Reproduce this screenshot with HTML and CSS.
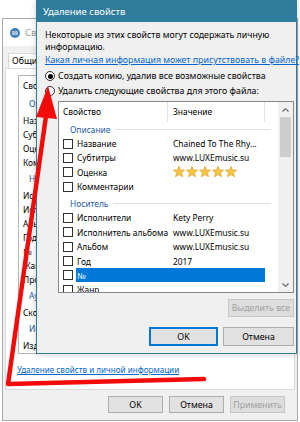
FILE: index.html
```html
<!DOCTYPE html>
<html lang="ru">
<head>
    <meta charset="UTF-8">
    <meta name="viewport" content="width=device-width, initial-scale=1.0">
    <title>Удаление свойств</title>
    <link rel="stylesheet" href="styles.css">
</head>
<body>
    <div class="screen">
        <!-- окно свойств файла на заднем плане -->
        <div class="props">
            <div class="props-title">
                <svg class="file-icon" width="10" height="10" viewBox="0 0 10 10">
                    <circle cx="5" cy="5" r="5" fill="#3f7fb5"/>
                    <rect x="2" y="3.5" width="6" height="1" fill="#fff"/>
                    <rect x="2" y="5.5" width="6" height="1" fill="#fff"/>
                </svg>
                <span>Свойства: Chained To The Rhythm.mp3</span>
            </div>
            <div class="tabs">
                <span class="tab">Общие</span>
                <span class="tab">Безопасность</span>
                <span class="tab active">Подробно</span>
            </div>
            <div class="tab-panel">
                <div class="details">
                    <div class="details-head">Свойство</div>
                    <div class="group">Описание</div>
                    <div class="item">Название</div>
                    <div class="item">Субтитры</div>
                    <div class="item">Оценка</div>
                    <div class="item">Комментарии</div>
                    <div class="group">Носитель</div>
                    <div class="item">Исполнители</div>
                    <div class="item">Исполнитель альбома</div>
                    <div class="item">Альбом</div>
                    <div class="item">Год</div>
                    <div class="item">№</div>
                    <div class="item">Жанр</div>
                    <div class="item">Продолжительность</div>
                    <div class="group">Аудио</div>
                    <div class="item">Скорость потока</div>
                    <div class="group">Источник</div>
                    <div class="item">Издатель</div>
                </div>
                <a class="remove-link" href="#">Удаление свойств и личной информации</a>
            </div>
            <div class="props-buttons">
                <button>OK</button>
                <button>Отмена</button>
                <button disabled>Применить</button>
            </div>
        </div>

        <!-- диалог удаления свойств -->
        <div class="dialog">
            <div class="dialog-title">Удаление свойств</div>
            <div class="dialog-body">
                <p class="intro">Некоторые из этих свойств могут содержать личную<br>информацию.</p>
                <a class="link" href="#">Какая личная информация может присутствовать в файле?</a>
                <div class="option first"><span class="radio on"></span>Создать копию, удалив все возможные свойства</div>
                <div class="option"><span class="radio"></span>Удалить следующие свойства для этого файла:</div>

                <div class="list">
                    <div class="list-main">
                        <div class="list-head">
                            <span class="col-name">Свойство</span>
                            <span class="col-value">Значение</span>
                            <span class="col-rest"></span>
                        </div>

                        <div class="list-group"><span>Описание</span><i></i></div>
                        <div class="row"><span class="check"></span><div class="cells"><span class="name">Название</span><span class="value">Chained To The Rhy…</span></div></div>
                        <div class="row"><span class="check"></span><div class="cells"><span class="name">Субтитры</span><span class="value">www.LUXEmusic.su</span></div></div>
                        <div class="row"><span class="check"></span><div class="cells"><span class="name">Оценка</span>
                            <span class="value">
                                <svg class="stars" width="66" height="12" viewBox="0 0 66 12">
                                    <defs>
                                        <polygon id="star" points="6,0.4 7.47,3.98 11.6,4.15 8.38,6.77 9.5,10.8 6,8.5 2.5,10.8 3.62,6.77 0.4,4.15 4.53,3.98"/>
                                    </defs>
                                    <use href="#star" x="0"/>
                                    <use href="#star" x="13"/>
                                    <use href="#star" x="26"/>
                                    <use href="#star" x="39"/>
                                    <use href="#star" x="52"/>
                                </svg>
                            </span></div></div>
                        <div class="row"><span class="check"></span><div class="cells"><span class="name">Комментарии</span><span class="value"></span></div></div>

                        <div class="list-group second"><span>Носитель</span><i></i></div>
                        <div class="row"><span class="check"></span><div class="cells"><span class="name">Исполнители</span><span class="value">Kety Perry</span></div></div>
                        <div class="row"><span class="check"></span><div class="cells"><span class="name">Исполнитель альбома</span><span class="value">www.LUXEmusic.su</span></div></div>
                        <div class="row"><span class="check"></span><div class="cells"><span class="name">Альбом</span><span class="value">www.LUXEmusic.su</span></div></div>
                        <div class="row"><span class="check"></span><div class="cells"><span class="name">Год</span><span class="value">2017</span></div></div>
                        <div class="row"><span class="check"></span><div class="cells selected"><span class="name">№</span><span class="value"></span></div></div>
                        <div class="row"><span class="check"></span><div class="cells"><span class="name">Жанр</span><span class="value"></span></div></div>
                    </div>
                    <div class="scrollbar">
                        <span class="sb-btn">
                            <svg width="7" height="4" viewBox="0 0 7 4"><polyline points="0.5,3.5 3.5,0.7 6.5,3.5" fill="none" stroke="#606060" stroke-width="1.1"/></svg>
                        </span>
                        <span class="sb-thumb"></span>
                        <span class="sb-track"></span>
                        <span class="sb-btn">
                            <svg width="7" height="4" viewBox="0 0 7 4"><polyline points="0.5,0.5 3.5,3.3 6.5,0.5" fill="none" stroke="#606060" stroke-width="1.1"/></svg>
                        </span>
                    </div>
                </div>

                <div class="select-row"><button class="select-all" disabled>Выделить все</button></div>
                <div class="dialog-buttons">
                    <button class="ok">OK</button>
                    <button class="cancel">Отмена</button>
                </div>
            </div>
        </div>

        <!-- красная пометка поверх скриншота -->
        <svg class="marker" width="300" height="422" viewBox="0 0 300 422">
            <path d="M46 116 L8 384 L204 379" fill="none" stroke="#f50a0a" stroke-width="4.5" stroke-linecap="round" stroke-linejoin="round"/>
            <polygon points="48,86 36,117 57,119" fill="#f50a0a"/>
        </svg>
    </div>
</body>
</html>
```

FILE: styles.css
```css
* {
    box-sizing: border-box;
}

body {
    margin: 0;
    width: 300px;
    height: 422px;
    overflow: hidden;
    background: #ffffff;
    font-family: "Noto Sans", sans-serif;
    font-size: 8.8px;
    color: #000000;
}

button {
    font-family: inherit;
    font-size: inherit;
    color: #000000;
    background: #e1e1e1;
    border: 1px solid #adadad;
    padding: 0;
}

button:disabled {
    color: #a0a0a0;
    background: #dedede;
    border-color: #c6c6c6;
}

.screen {
    position: relative;
    width: 300px;
    height: 422px;
    padding-top: 18px;
}

/* ---- окно свойств ---- */

.props {
    margin-left: 2px;
    width: 296px;
    height: 403px;
    border: 1px solid #a9a9a9;
    background: #f0f0f0;
    display: flex;
    flex-direction: column;
}

.props-title {
    height: 27px;
    flex-shrink: 0;
    background: #ffffff;
    display: flex;
    align-items: center;
    gap: 5px;
    padding-left: 7px;
    color: #9a9a9a;
    font-size: 9.5px;
    white-space: nowrap;
}

.tabs {
    height: 22px;
    flex-shrink: 0;
    display: flex;
    padding: 7px 0 0 5px;
}

.tab {
    height: 15px;
    padding: 0 3px;
    line-height: 14px;
    border: 1px solid #d9d9d9;
    border-bottom: none;
    background: #ffffff;
    white-space: nowrap;
}

.tab-panel {
    height: 322px;
    flex-shrink: 0;
    margin: 0 2px;
    background: #ffffff;
    border: 1px solid #d9d9d9;
    padding: 6px 0 0 12px;
}

.details {
    width: 200px;
    height: 279px;
    border: 1px solid #b5b5b5;
    overflow: hidden;
    white-space: nowrap;
    font-size: 8.4px;
}

.details-head {
    height: 19px;
    line-height: 19px;
    padding-left: 4px;
}

.details .group {
    height: 19px;
    padding: 2px 0 3px 10px;
    line-height: 14px;
    color: #1e5aa0;
}

.details .item {
    height: 14px;
    line-height: 14px;
    padding-left: 4px;
}

.remove-link {
    display: block;
    margin: 10px 0 0 -1px;
    line-height: 12px;
    font-size: 8.1px;
    color: #0066cc;
    white-space: nowrap;
}

.props-buttons {
    display: flex;
    justify-content: flex-end;
    gap: 6px;
    padding: 6px 12px 0 0;
}

.props-buttons button {
    width: 55px;
    height: 17px;
}

/* ---- диалог ---- */

.dialog {
    position: absolute;
    left: 36px;
    top: 0;
    width: 261px;
    height: 354px;
    border: 1px solid #2f7d9c;
    background: #f0f0f0;
    box-shadow: 0 0 6px rgba(0, 0, 0, 0.2);
}

.dialog-title {
    height: 21px;
    line-height: 21px;
    padding-left: 6px;
    background: #2f7d9c;
    color: #ffffff;
    font-size: 9.5px;
}

.dialog-body {
    padding: 7px 2px 0 8px;
}

.intro {
    margin: 0;
    line-height: 12px;
}

.link {
    display: block;
    margin-top: 1px;
    line-height: 12px;
    color: #0066cc;
    white-space: nowrap;
}

.option {
    display: flex;
    align-items: center;
    gap: 3px;
    line-height: 12px;
    margin-top: 3px;
    white-space: nowrap;
}

.option.first {
    margin-top: 4px;
}

.radio {
    width: 10px;
    height: 10px;
    border: 1px solid #333333;
    border-radius: 50%;
    background: #ffffff;
    display: flex;
    align-items: center;
    justify-content: center;
}

.radio.on::after {
    content: "";
    width: 5px;
    height: 5px;
    border-radius: 50%;
    background: #000000;
}

.list {
    margin: 4px 0 0 13px;
    width: 236px;
    height: 192px;
    border: 1px solid #828790;
    background: #ffffff;
    display: flex;
}

.list-main {
    width: 219px;
    overflow: hidden;
    white-space: nowrap;
    font-size: 8.4px;
}

.list-head {
    height: 20px;
    display: flex;
    line-height: 20px;
}

.list-head span {
    border-right: 1px solid #e5e5e5;
}

.col-name {
    width: 109px;
    padding-left: 4px;
}

.col-value {
    width: 97px;
    padding-left: 5px;
}

.col-rest {
    flex: 1;
    border-right: none !important;
}

.list-group {
    height: 14.4px;
    display: flex;
    align-items: center;
    padding-left: 11px;
    color: #1e5aa0;
}

.list-group.second {
    margin-top: 2.4px;
}

.list-group i {
    flex: 1;
    height: 1px;
    margin: 0 7px 0 5px;
    background: #e2e2e2;
}

.row {
    height: 14.4px;
    display: flex;
    align-items: center;
}

.check {
    width: 10px;
    height: 10px;
    margin: 0 3px 0 4px;
    border: 1px solid #333333;
    background: #ffffff;
    flex-shrink: 0;
}

.cells {
    display: flex;
    align-items: center;
    height: 14px;
}

.cells.selected {
    background: #0078d7;
    color: #ffffff;
}

.name {
    width: 92px;
    padding-left: 1px;
    overflow: hidden;
}

.value {
    width: 97px;
    padding-left: 5px;
    display: flex;
    align-items: center;
}

.stars {
    fill: #f6c544;
    stroke: #e0a020;
    stroke-width: 0.7;
}

.scrollbar {
    width: 15px;
    display: flex;
    flex-direction: column;
    background: #f0f0f0;
}

.sb-btn {
    height: 15px;
    display: flex;
    align-items: center;
    justify-content: center;
}

.sb-thumb {
    height: 40px;
    margin: 0 2px;
    background: #cdcdcd;
}

.sb-track {
    flex: 1;
}

.select-row {
    display: flex;
    justify-content: flex-end;
    margin-top: 6px;
}

.select-all {
    width: 66px;
    height: 18px;
}

.dialog-buttons {
    display: flex;
    justify-content: flex-end;
    gap: 5px;
    margin-top: 10px;
}

.dialog-buttons button {
    height: 19px;
}

.ok {
    width: 69px;
    border-color: #0078d7;
    box-shadow: inset 0 0 0 1px #0078d7;
}

.cancel {
    width: 71px;
}

.marker {
    position: absolute;
    left: 0;
    top: 0;
    pointer-events: none;
}
```
